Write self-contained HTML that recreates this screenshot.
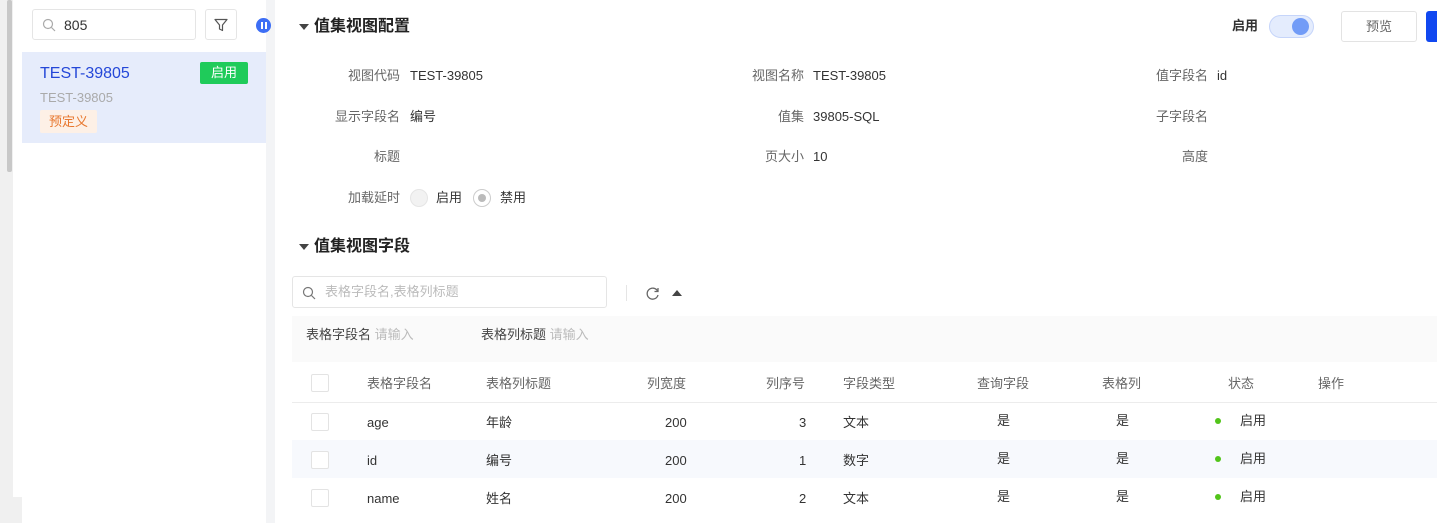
<!DOCTYPE html>
<html><head><meta charset="utf-8"><style>
*{margin:0;padding:0;box-sizing:border-box}
body{width:1437px;height:523px;overflow:hidden;background:#fff;font-family:"Liberation Sans","Noto Sans CJK SC",sans-serif;font-size:13px;line-height:18px;color:#333;position:relative}
.a{position:absolute}
.lbl{color:#666;text-align:right;width:200px}
.cb{width:18px;height:18px;border:1px solid #e3e3e3;border-radius:2px;background:#fff}
.dot{width:6px;height:6px;border-radius:50%;background:#52c41a}
h2{font-size:16px;line-height:20px;font-weight:bold;color:#222}
.tri{width:0;height:0;border-left:5px solid transparent;border-right:5px solid transparent;border-top:6px solid #444}
</style></head><body>
<div class="a" style="left:0;top:0;width:13px;height:523px;background:#f0f0f0"></div>
<div class="a" style="left:7px;top:0;width:5px;height:172px;background:#c8c8c8;border-radius:2px"></div>
<div class="a" style="left:0;top:497px;width:22px;height:26px;background:#f0f0f0"></div>
<div class="a" style="left:266px;top:0;width:9px;height:523px;background:#f3f4f6"></div>

<div class="a" style="left:32px;top:9px;width:164px;height:31px;border:1px solid #e5e5e5;border-radius:3px"></div>
<svg class="a" style="left:42px;top:18px" width="14" height="14" viewBox="0 0 14 14"><circle cx="6" cy="6" r="4.5" fill="none" stroke="#aaa" stroke-width="1.2"/><path d="M9.5 9.5L13 13" stroke="#aaa" stroke-width="1.2"/></svg>
<div class="a" style="left:64px;top:16px;font-size:14px;color:#333">805</div>
<div class="a" style="left:205px;top:9px;width:32px;height:31px;border:1px solid #e5e5e5;border-radius:3px"></div>
<svg class="a" style="left:213px;top:17px" width="16" height="16" viewBox="0 0 16 16"><path d="M2 2.5h12l-4.5 5.5v5.5l-3-1.5v-4z" fill="none" stroke="#555" stroke-width="1.2" stroke-linejoin="round"/></svg>
<div class="a" style="left:256px;top:18px;width:15px;height:15px;border-radius:50%;background:#3d6ef5"></div>
<div class="a" style="left:261px;top:22px;width:2px;height:7px;background:#fff"></div><div class="a" style="left:265px;top:22px;width:2px;height:7px;background:#fff"></div>

<div class="a" style="left:22px;top:52px;width:244px;height:91px;background:#e6ecfb"></div>
<div class="a" style="left:40px;top:64px;font-size:16px;line-height:20px;color:#2447d8">TEST-39805</div>
<div class="a" style="left:200px;top:62px;width:48px;height:22px;background:#1fcb5a;color:#fff;border-radius:2px;text-align:center;line-height:22px;font-size:13px">启用</div>
<div class="a" style="left:40px;top:89px;color:#aaa;font-size:13px">TEST-39805</div>
<div class="a" style="left:40px;top:110px;width:57px;height:23px;background:#fdf0e6;color:#e8772e;text-align:center;line-height:23px;font-size:13px;border-radius:2px">预定义</div>

<div class="tri a" style="left:299px;top:24px"></div>
<h2 class="a" style="left:314px;top:17px">值集视图配置</h2>
<div class="a" style="left:1232px;top:17px;font-weight:bold;font-size:13px">启用</div>
<div class="a" style="left:1269px;top:15px;width:45px;height:23px;border-radius:12px;background:#e4ecfd;border:1px solid #c6d5fa"></div>
<div class="a" style="left:1292px;top:18px;width:17px;height:17px;border-radius:50%;background:#729cf7"></div>
<div class="a" style="left:1341px;top:11px;width:76px;height:31px;border:1px solid #e3e3e3;border-radius:3px;text-align:center;line-height:30px;color:#666">预览</div>
<div class="a" style="left:1426px;top:11px;width:11px;height:31px;background:#1148f0;border-radius:3px 0 0 3px"></div>

<div class="a lbl" style="left:200px;top:67px">视图代码</div><div class="a" style="left:410px;top:67px">TEST-39805</div>
<div class="a lbl" style="left:604px;top:67px">视图名称</div><div class="a" style="left:813px;top:67px">TEST-39805</div>
<div class="a lbl" style="left:1008px;top:67px">值字段名</div><div class="a" style="left:1217px;top:67px">id</div>
<div class="a lbl" style="left:200px;top:108px">显示字段名</div><div class="a" style="left:410px;top:108px">编号</div>
<div class="a lbl" style="left:604px;top:108px">值集</div><div class="a" style="left:813px;top:108px">39805-SQL</div>
<div class="a lbl" style="left:1008px;top:108px">子字段名</div>
<div class="a lbl" style="left:200px;top:148px">标题</div>
<div class="a lbl" style="left:604px;top:148px">页大小</div><div class="a" style="left:813px;top:148px">10</div>
<div class="a lbl" style="left:1008px;top:148px">高度</div>
<div class="a lbl" style="left:200px;top:189px">加载延时</div>
<div class="a" style="left:410px;top:189px;width:18px;height:18px;border-radius:50%;background:#f2f2f2;border:1px solid #e5e5e5"></div>
<div class="a" style="left:436px;top:189px">启用</div>
<div class="a" style="left:473px;top:189px;width:18px;height:18px;border-radius:50%;background:#fff;border:1px solid #ccc"></div>
<div class="a" style="left:478px;top:194px;width:8px;height:8px;border-radius:50%;background:#bbb"></div>
<div class="a" style="left:500px;top:189px">禁用</div>

<div class="tri a" style="left:299px;top:244px"></div>
<h2 class="a" style="left:314px;top:237px">值集视图字段</h2>

<div class="a" style="left:292px;top:276px;width:315px;height:32px;border:1px solid #e5e5e5;border-radius:3px"></div>
<svg class="a" style="left:302px;top:286px" width="14" height="14" viewBox="0 0 14 14"><circle cx="6" cy="6" r="4.5" fill="none" stroke="#777" stroke-width="1.2"/><path d="M9.5 9.5L13 13" stroke="#777" stroke-width="1.2"/></svg>
<div class="a" style="left:325px;top:283px;color:#bbb">表格字段名,表格列标题</div>
<div class="a" style="left:626px;top:285px;width:1px;height:16px;background:#e5e5e5"></div>
<svg class="a" style="left:645px;top:286px" width="15" height="15" viewBox="0 0 15 15"><path d="M12.5 5A5.5 5.5 0 1 0 13 9" fill="none" stroke="#666" stroke-width="1.3"/><path d="M13 2v3.5h-3.5" fill="none" stroke="#666" stroke-width="1.3"/></svg>
<div class="a" style="left:672px;top:290px;border-left:5px solid transparent;border-right:5px solid transparent;border-bottom:6px solid #444;width:0;height:0"></div>

<div class="a" style="left:292px;top:316px;width:1145px;height:46px;background:#fafafa"></div>
<div class="a" style="left:306px;top:326px;color:#444">表格字段名 <span style="color:#bbb">请输入</span></div>
<div class="a" style="left:481px;top:326px;color:#444">表格列标题 <span style="color:#bbb">请输入</span></div>

<div class="a" style="left:292px;top:402px;width:1145px;height:1px;background:#ececec"></div>
<div class="a" style="left:292px;top:440px;width:1145px;height:38px;background:#f7f9fd"></div>
<div class="a cb" style="left:311px;top:374px"></div>
<div class="a" style="left:367px;top:375px;color:#666">表格字段名</div>
<div class="a" style="left:486px;top:375px;color:#666">表格列标题</div>
<div class="a" style="left:647px;top:375px;color:#666">列宽度</div>
<div class="a" style="left:766px;top:375px;color:#666">列序号</div>
<div class="a" style="left:843px;top:375px;color:#666">字段类型</div>
<div class="a" style="left:977px;top:375px;color:#666">查询字段</div>
<div class="a" style="left:1102px;top:375px;color:#666">表格列</div>
<div class="a" style="left:1228px;top:375px;color:#666">状态</div>
<div class="a" style="left:1318px;top:375px;color:#666">操作</div>

<div class="a cb" style="left:311px;top:413px"></div>
<div class="a" style="left:367px;top:414px">age</div><div class="a" style="left:486px;top:414px">年龄</div>
<div class="a" style="left:665px;top:414px">200</div><div class="a" style="left:799px;top:414px">3</div>
<div class="a" style="left:843px;top:414px">文本</div><div class="a" style="left:997px;top:412px">是</div><div class="a" style="left:1116px;top:412px">是</div>
<div class="a dot" style="left:1215px;top:418px"></div><div class="a" style="left:1240px;top:412px">启用</div>

<div class="a cb" style="left:311px;top:451px"></div>
<div class="a" style="left:367px;top:452px">id</div><div class="a" style="left:486px;top:452px">编号</div>
<div class="a" style="left:665px;top:452px">200</div><div class="a" style="left:799px;top:452px">1</div>
<div class="a" style="left:843px;top:452px">数字</div><div class="a" style="left:997px;top:450px">是</div><div class="a" style="left:1116px;top:450px">是</div>
<div class="a dot" style="left:1215px;top:456px"></div><div class="a" style="left:1240px;top:450px">启用</div>

<div class="a cb" style="left:311px;top:489px"></div>
<div class="a" style="left:367px;top:490px">name</div><div class="a" style="left:486px;top:490px">姓名</div>
<div class="a" style="left:665px;top:490px">200</div><div class="a" style="left:799px;top:490px">2</div>
<div class="a" style="left:843px;top:490px">文本</div><div class="a" style="left:997px;top:488px">是</div><div class="a" style="left:1116px;top:488px">是</div>
<div class="a dot" style="left:1215px;top:494px"></div><div class="a" style="left:1240px;top:488px">启用</div>
</body></html>
